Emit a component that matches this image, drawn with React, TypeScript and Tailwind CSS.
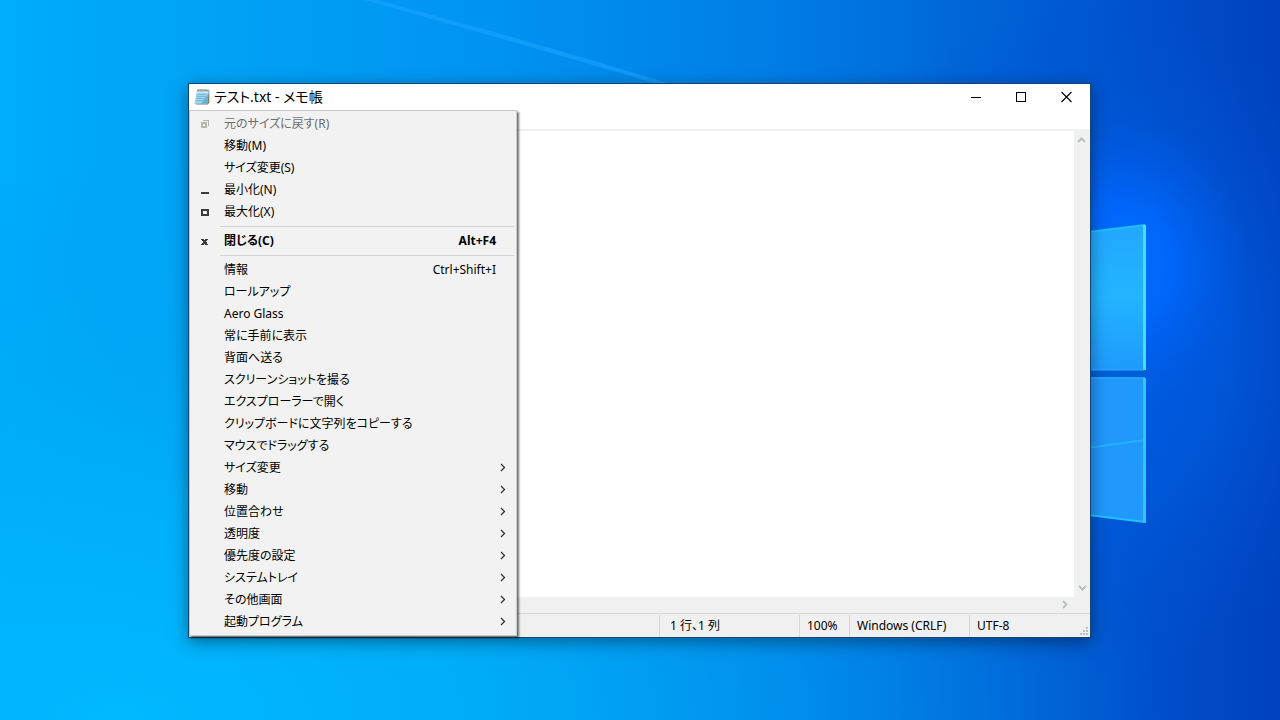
import React from "react";

interface MenuEntry {
  label: string;
  shortcut?: string;
  icon?: "restore" | "minimize" | "maximize" | "close";
  disabled?: boolean;
  bold?: boolean;
  submenu?: boolean;
}

const menuGroups: MenuEntry[][] = [
  [
    { label: "元のサイズに戻す(R)", icon: "restore", disabled: true },
    { label: "移動(M)" },
    { label: "サイズ変更(S)" },
    { label: "最小化(N)", icon: "minimize" },
    { label: "最大化(X)", icon: "maximize" },
  ],
  [{ label: "閉じる(C)", icon: "close", shortcut: "Alt+F4", bold: true }],
  [
    { label: "情報", shortcut: "Ctrl+Shift+I" },
    { label: "ロールアップ" },
    { label: "Aero Glass" },
    { label: "常に手前に表示" },
    { label: "背面へ送る" },
    { label: "スクリーンショットを撮る" },
    { label: "エクスプローラーで開く" },
    { label: "クリップボードに文字列をコピーする" },
    { label: "マウスでドラッグする" },
    { label: "サイズ変更", submenu: true },
    { label: "移動", submenu: true },
    { label: "位置合わせ", submenu: true },
    { label: "透明度", submenu: true },
    { label: "優先度の設定", submenu: true },
    { label: "システムトレイ", submenu: true },
    { label: "その他画面", submenu: true },
    { label: "起動プログラム", submenu: true },
  ],
];

function Wallpaper() {
  return (
    <svg
      className="absolute inset-0 h-full w-full"
      viewBox="0 0 1280 720"
      preserveAspectRatio="xMidYMid slice"
      aria-hidden="true"
    >
      <defs>
        <linearGradient id="sky" x1="0" y1="0" x2="1" y2="0">
          <stop offset="0" stopColor="#00acfc" />
          <stop offset="0.17" stopColor="#00a2f6" />
          <stop offset="0.4" stopColor="#0092f0" />
          <stop offset="0.6" stopColor="#007ee6" />
          <stop offset="0.78" stopColor="#0062d6" />
          <stop offset="0.9" stopColor="#004fcb" />
          <stop offset="1" stopColor="#0041be" />
        </linearGradient>
        <radialGradient
          id="horizon"
          gradientUnits="userSpaceOnUse"
          cx="0"
          cy="0"
          r="1"
          gradientTransform="translate(120 720) scale(1050 560)"
        >
          <stop offset="0" stopColor="#00b9ff" />
          <stop offset="0.35" stopColor="#00b3fb" stopOpacity="0.75" />
          <stop offset="1" stopColor="#009cf0" stopOpacity="0" />
        </radialGradient>
        <radialGradient
          id="halo"
          gradientUnits="userSpaceOnUse"
          cx="0"
          cy="0"
          r="1"
          gradientTransform="translate(1090 340) scale(290 340)"
        >
          <stop offset="0" stopColor="#0060e6" />
          <stop offset="0.5" stopColor="#005ade" stopOpacity="0.7" />
          <stop offset="1" stopColor="#0050d0" stopOpacity="0" />
        </radialGradient>
        <radialGradient
          id="glow"
          gradientUnits="userSpaceOnUse"
          cx="0"
          cy="0"
          r="1"
          gradientTransform="translate(1120 265) scale(130 150)"
        >
          <stop offset="0" stopColor="#0070ff" />
          <stop offset="0.4" stopColor="#0068ff" stopOpacity="0.85" />
          <stop offset="1" stopColor="#005ae6" stopOpacity="0" />
        </radialGradient>
        <linearGradient id="paneTop" x1="0" y1="0" x2="0" y2="1">
          <stop offset="0" stopColor="#22a8ff" />
          <stop offset="0.5" stopColor="#22b4ff" />
          <stop offset="1" stopColor="#1f9aff" />
        </linearGradient>
      </defs>
      <rect width="1280" height="720" fill="url(#sky)" />
      <rect width="1280" height="720" fill="url(#horizon)" />
      <rect width="1280" height="720" fill="url(#halo)" />
      <rect width="1280" height="720" fill="url(#glow)" />
      <path d="M356 -2 L370 -2 Q520 38 668 83 L654 83 Q510 40 356 -2 Z" fill="#1aa4ff" opacity="0.6" />
      <path d="M1000 371 H1147 V377 H1000 Z" fill="#005fd6" />
      <path d="M1000 242 L1145 225 V370 H1000 Z" fill="url(#paneTop)" />
      <path d="M1000 377 H1145 V522 L1000 506 Z" fill="#2098fc" />
      <path d="M1000 460 L1145 440" stroke="#25b0ff" strokeWidth="2" fill="none" />
      <path d="M1000 243 L1145 225" stroke="#1cc0ff" strokeWidth="2" fill="none" />
      <path d="M1000 370 H1144 M1000 378 H1144" stroke="#28aeff" strokeWidth="1" fill="none" />
      <path d="M1000 504 L1145 522" stroke="#1fc4ff" strokeWidth="2" fill="none" />
      <path d="M1144.500 225 V370" stroke="#3fe2ff" strokeWidth="3" fill="none" />
      <path d="M1144.500 378 V523" stroke="#2cc8ff" strokeWidth="3" fill="none" />
    </svg>
  );
}

function NotepadIcon() {
  return (
    <svg width="16" height="16" viewBox="0 0 16 16" aria-hidden="true">
      <path d="M3.500 1.500 H15.300 V13.500 L14 15.500 H2 Z" fill="#7d7a6c" />
      <path d="M3 1.500 H14.800 L13.400 14.700 H0.300 Z" fill="#9bd3ec" />
      <path d="M3 1.500 H14.800 L14.500 4 H2.500 Z" fill="#cdeaf5" />
      <path d="M7 14.700 L14.300 5 L13.400 14.700 Z" fill="#68afd2" />
      <path
        d="M3.500 5.500 H12.500 M3.200 7.500 H12.300 M3 9.500 H12.100 M2.700 11.500 H11.900"
        stroke="#5fa9cc"
        strokeWidth="0.600"
      />
      <path
        d="M4 0 V2.500 M6 0 V2.500 M8 0 V2.500 M10 0 V2.500 M12 0 V2.500 M14 0.500 V2.500"
        stroke="#666"
        strokeWidth="0.900"
      />
    </svg>
  );
}

function MenuIcon({ name }: { name: MenuEntry["icon"] }) {
  return (
    <svg width="10" height="10" viewBox="0 0 10 10" shapeRendering="crispEdges" aria-hidden="true">
      {name === "restore" && (
        <>
          <path d="M3 1 H9 V7 H8 V2 H3 Z" fill="#b4b8ac" />
          <path d="M1 3 H7 V9 H1 Z M3 5 V7 H5 V5 Z" fill="#b4b8ac" fillRule="evenodd" />
        </>
      )}
      {name === "minimize" && <path d="M1 7 H9 V9 H1 Z" fill="#3c3c3c" />}
      {name === "maximize" && (
        <path d="M1 2 H9 V9 H1 Z M3 4 V7 H7 V4 Z" fill="#3c3c3c" fillRule="evenodd" />
      )}
      {name === "close" && (
        <path
          d="M1 3 H4 V4 H5 V3 H8 V4 H7 V5 H6 V6 H7 V8 H8 V9 H5 V8 H4 V9 H1 V8 H2 V7 H3 V5 H2 V4 H1 Z"
          fill="#3c3c3c"
        />
      )}
    </svg>
  );
}

function Chevron({ className, thick }: { className?: string; thick?: boolean }) {
  return (
    <svg className={className} width="10" height="10" viewBox="0 0 10 10" fill="none" aria-hidden="true">
      <path d="M3 1 L6.500 4.500 L3 8" stroke="currentColor" strokeWidth={thick ? 2 : 1.3} />
    </svg>
  );
}

function MenuRow({ item }: { item: MenuEntry }) {
  return (
    <button
      role="menuitem"
      disabled={item.disabled}
      className={`flex h-[22px] w-full items-center text-left ${
        item.disabled ? "text-[#6d6d6d]" : "text-black"
      } ${item.bold ? "font-bold" : ""}`}
    >
      <span className="flex w-[34px] shrink-0 pl-[10px]">
        {item.icon && <MenuIcon name={item.icon} />}
      </span>
      <span className="flex-1 whitespace-nowrap">{item.label}</span>
      {item.shortcut && <span className="pr-5">{item.shortcut}</span>}
      {item.submenu && <Chevron className="mr-2 text-[#333]" />}
    </button>
  );
}

function SystemMenu() {
  return (
    <div
      role="menu"
      className="absolute top-[26px] left-0 w-[328px] border border-[#c8c8c8] bg-[#f2f2f2] py-[2px] text-xs leading-5 shadow-[2px_2px_2px_rgba(0,0,0,0.55)]"
    >
      {menuGroups.map((group, i) => (
        <div key={i}>
          {i > 0 && (
            <div role="separator" className="flex h-[7px] items-center pr-[2px] pl-[30px]">
              <div className="h-px w-full bg-[#d4d4d4]" />
            </div>
          )}
          {group.map((item) => (
            <MenuRow key={item.label} item={item} />
          ))}
        </div>
      ))}
    </div>
  );
}

function TitleBar() {
  return (
    <header className="flex h-[45px] items-start justify-between bg-white">
      <div className="flex h-[26px] items-center gap-1 pl-[5px]">
        <NotepadIcon />
        <h1 className="text-sm leading-5 whitespace-nowrap">テスト.txt - メモ帳</h1>
      </div>
      <div className="flex h-[26px]">
        <button aria-label="最小化" className="flex w-[45px] items-center justify-center">
          <svg width="11" height="11" viewBox="0 0 11 11" shapeRendering="crispEdges">
            <path d="M1 5 H11 V6 H1 Z" fill="#000" />
          </svg>
        </button>
        <button aria-label="最大化" className="flex w-[46px] items-center justify-center">
          <svg width="10" height="10" viewBox="0 0 10 10" shapeRendering="crispEdges">
            <path d="M0 0 H10 V10 H0 Z M1 1 V9 H9 V1 Z" fill="#000" fillRule="evenodd" />
          </svg>
        </button>
        <button aria-label="閉じる" className="flex w-[46px] items-center justify-center">
          <svg width="12" height="12" viewBox="0 0 12 12" fill="none">
            <path d="M0.500 1 L10.500 11 M10.500 1 L0.500 11" stroke="#000" strokeWidth="1.100" />
          </svg>
        </button>
      </div>
    </header>
  );
}

function StatusBar() {
  return (
    <footer className="flex h-6 border-t border-[#d7d7d7] bg-[#f0f0f0] pt-px text-xs leading-[22px] whitespace-nowrap">
      <div className="flex-1" />
      <div className="w-[140px] border-l border-[#d7d7d7] pl-[10px]">1 行、1 列</div>
      <div className="w-[50px] border-l border-[#d7d7d7] pl-[7px]">100%</div>
      <div className="w-[120px] border-l border-[#d7d7d7] pl-[7px]">Windows (CRLF)</div>
      <div className="flex w-[121px] items-end justify-between border-l border-[#d7d7d7] pr-px pl-[7px]">
        <span>UTF-8</span>
        <svg width="10" height="11" viewBox="0 0 10 11" shapeRendering="crispEdges" aria-hidden="true">
          <path
            d="M7 1h2v2h-2z M4 4h2v2h-2z M7 4h2v2h-2z M1 7h2v2h-2z M4 7h2v2h-2z M7 7h2v2h-2z"
            fill="#bfbfbf"
          />
        </svg>
      </div>
    </footer>
  );
}

export default function App() {
  return (
    <div className="relative flex min-h-screen overflow-hidden bg-[#0078d7] pt-[83px] pr-[189px] pb-[82px] pl-[188px] font-['Noto_Sans','Noto_Sans_CJK_JP',sans-serif] text-black [font-feature-settings:'palt']">
      <Wallpaper />
      <main className="relative flex min-w-0 flex-1 flex-col border border-[#14456e] bg-white shadow-[0_4px_16px_rgba(0,0,0,0.4)]">
        <TitleBar />
        <div className="flex flex-1 border-t-2 border-[#f0f0f0]">
          <textarea aria-label="テキスト エディター" className="min-w-0 flex-1 resize-none bg-white outline-none" />
          <div className="flex w-4 flex-col items-center justify-between bg-[#f0f0f0] py-1 text-[#b9bfbf]">
            <button aria-label="上へスクロール">
              <Chevron className="-rotate-90" thick />
            </button>
            <button aria-label="下へスクロール">
              <Chevron className="rotate-90" thick />
            </button>
          </div>
        </div>
        <div className="flex h-4 items-center justify-end bg-[#f0f0f0] pr-5 text-[#b9bfbf]">
          <button aria-label="右へスクロール">
            <Chevron thick />
          </button>
        </div>
        <StatusBar />
        <SystemMenu />
      </main>
    </div>
  );
}
